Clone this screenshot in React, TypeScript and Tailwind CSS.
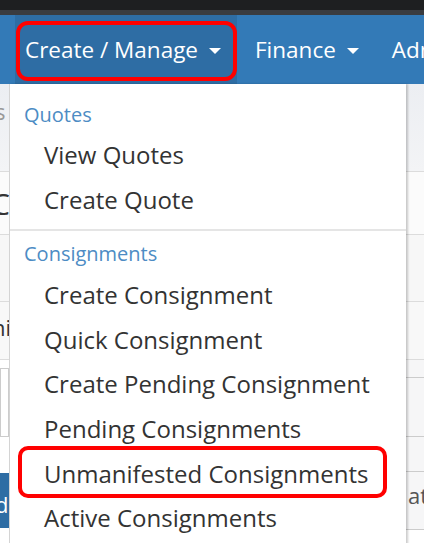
import React from "react";

function Caret() {
  return (
    <span className="inline-block ml-[11px] mt-[2px] w-0 h-0 border-l-[6px] border-r-[6px] border-t-[6px] border-l-transparent border-r-transparent border-t-white" />
  );
}

const items1 = ["View Quotes", "Create Quote"];
const items2 = [
  "Create Consignment",
  "Quick Consignment",
  "Create Pending Consignment",
  "Pending Consignments",
  "Unmanifested Consignments",
  "Active Consignments",
];

export default function App() {
  return (
    <div
      className="relative w-[424px] h-[543px] overflow-hidden bg-white"
      style={{ fontFamily: '"Open Sans", "Noto Sans", sans-serif' }}
    >
      {/* top dark strip */}
      <div className="h-[10px] bg-[#1e1f21]" />
      <div className="h-[5px] bg-[#3a3c40]" />
      {/* navbar */}
      <div className="h-[69px] bg-[#337ab7] flex items-stretch text-white text-[22.5px] whitespace-nowrap">
        <div className="w-[15px] shrink-0" />
        <div className="w-[222px] shrink-0 bg-[#2e6da4] flex items-center pl-[10px]">
          <span>Create / Manage</span>
          <Caret />
        </div>
        <div className="flex items-center pl-[18px] pr-[33px] shrink-0">
          <span>Finance</span>
          <Caret />
        </div>
        <div className="flex items-center shrink-0">
          <span>Admin</span>
        </div>
      </div>

      {/* page behind */}
      <div className="flex flex-col">
        <div className="h-[88px] bg-gradient-to-b from-[#eceef2] to-[#f3f4f6] border-b border-[#dcdcdc] text-[22px] text-[#999] leading-none">
          <span className="block -ml-[5px] mt-[16px]">s</span>
        </div>
        <div className="h-[63px] border-b border-[#dcdcdc] bg-[#fbfbfb] flex items-center text-[30px] text-[#333]">
          <span className="-ml-[9px]">C</span>
        </div>
        <div className="h-[67px] border-b border-[#dcdcdc] bg-[#f7f7f7]" />
        <div className="h-[58px] border-b border-[#dcdcdc] bg-[#f8f8f8] flex items-center text-[22px] text-[#333]">
          <span className="-ml-[8px] mt-[-6px]">ni</span>
        </div>
        <div className="flex">
          <div className="w-[9px] flex flex-col">
            <div className="h-[8px]" />
            <div className="h-[69px] border border-[#ccc] bg-white" />
            <div className="h-[36px]" />
            <div className="h-[55px] bg-[#2e6da4] text-white text-[22px] leading-none overflow-hidden">
              <span className="block -ml-[5px] mt-[20px]">d</span>
            </div>
          </div>
          <div className="flex-1 flex flex-col bg-[#f6f6f7]">
            <div className="h-[18px] border-b border-[#ccc]" />
            <div className="h-[59px] border-b border-[#ccc]" />
            <div className="h-[35px] border-b border-[#ccc]" />
            <div className="h-[58px] border-b border-[#ccc] flex justify-end text-[22px] text-[#555] leading-none">
              <span className="mr-[-4px] mt-[12px]">at</span>
            </div>
            <div className="h-[30px] bg-white" />
          </div>
        </div>
      </div>

      {/* dropdown menu */}
      <div className="absolute left-[9px] top-[84px] w-[397px] h-[480px] bg-white border-l border-[#d4d4d4] shadow-[2px_0_2px_rgba(0,0,0,0.2)] whitespace-nowrap">
        <div className="pt-[13px]">
          <div className="h-[36px] leading-[36px] pl-[14px] text-[20px] text-[#4d8cc4]">Quotes</div>
          {items1.map((t) => (
            <div key={t} className="h-[44.6px] leading-[44.6px] pl-[34px] text-[24px] text-[#333]">
              {t}
            </div>
          ))}
          <div className="mt-[7px] h-[2px] bg-[#e5e5e5]" />
          <div className="mt-[5px] h-[36px] leading-[36px] pl-[14px] text-[20px] text-[#4d8cc4]">Consignments</div>
          <div className="h-[1px]" />
          {items2.map((t) => (
            <div key={t} className="h-[44.6px] leading-[44.6px] pl-[34px] text-[24px] text-[#333]">
              {t}
            </div>
          ))}
        </div>
      </div>

      {/* red highlight boxes */}
      <div className="absolute left-[16px] top-[21px] w-[221px] h-[60px] border-[4px] border-[#f00] rounded-[12px]" />
      <div className="absolute left-[18px] top-[446px] w-[369px] h-[52px] border-[4px] border-[#f00] rounded-[10px]" />
    </div>
  );
}
